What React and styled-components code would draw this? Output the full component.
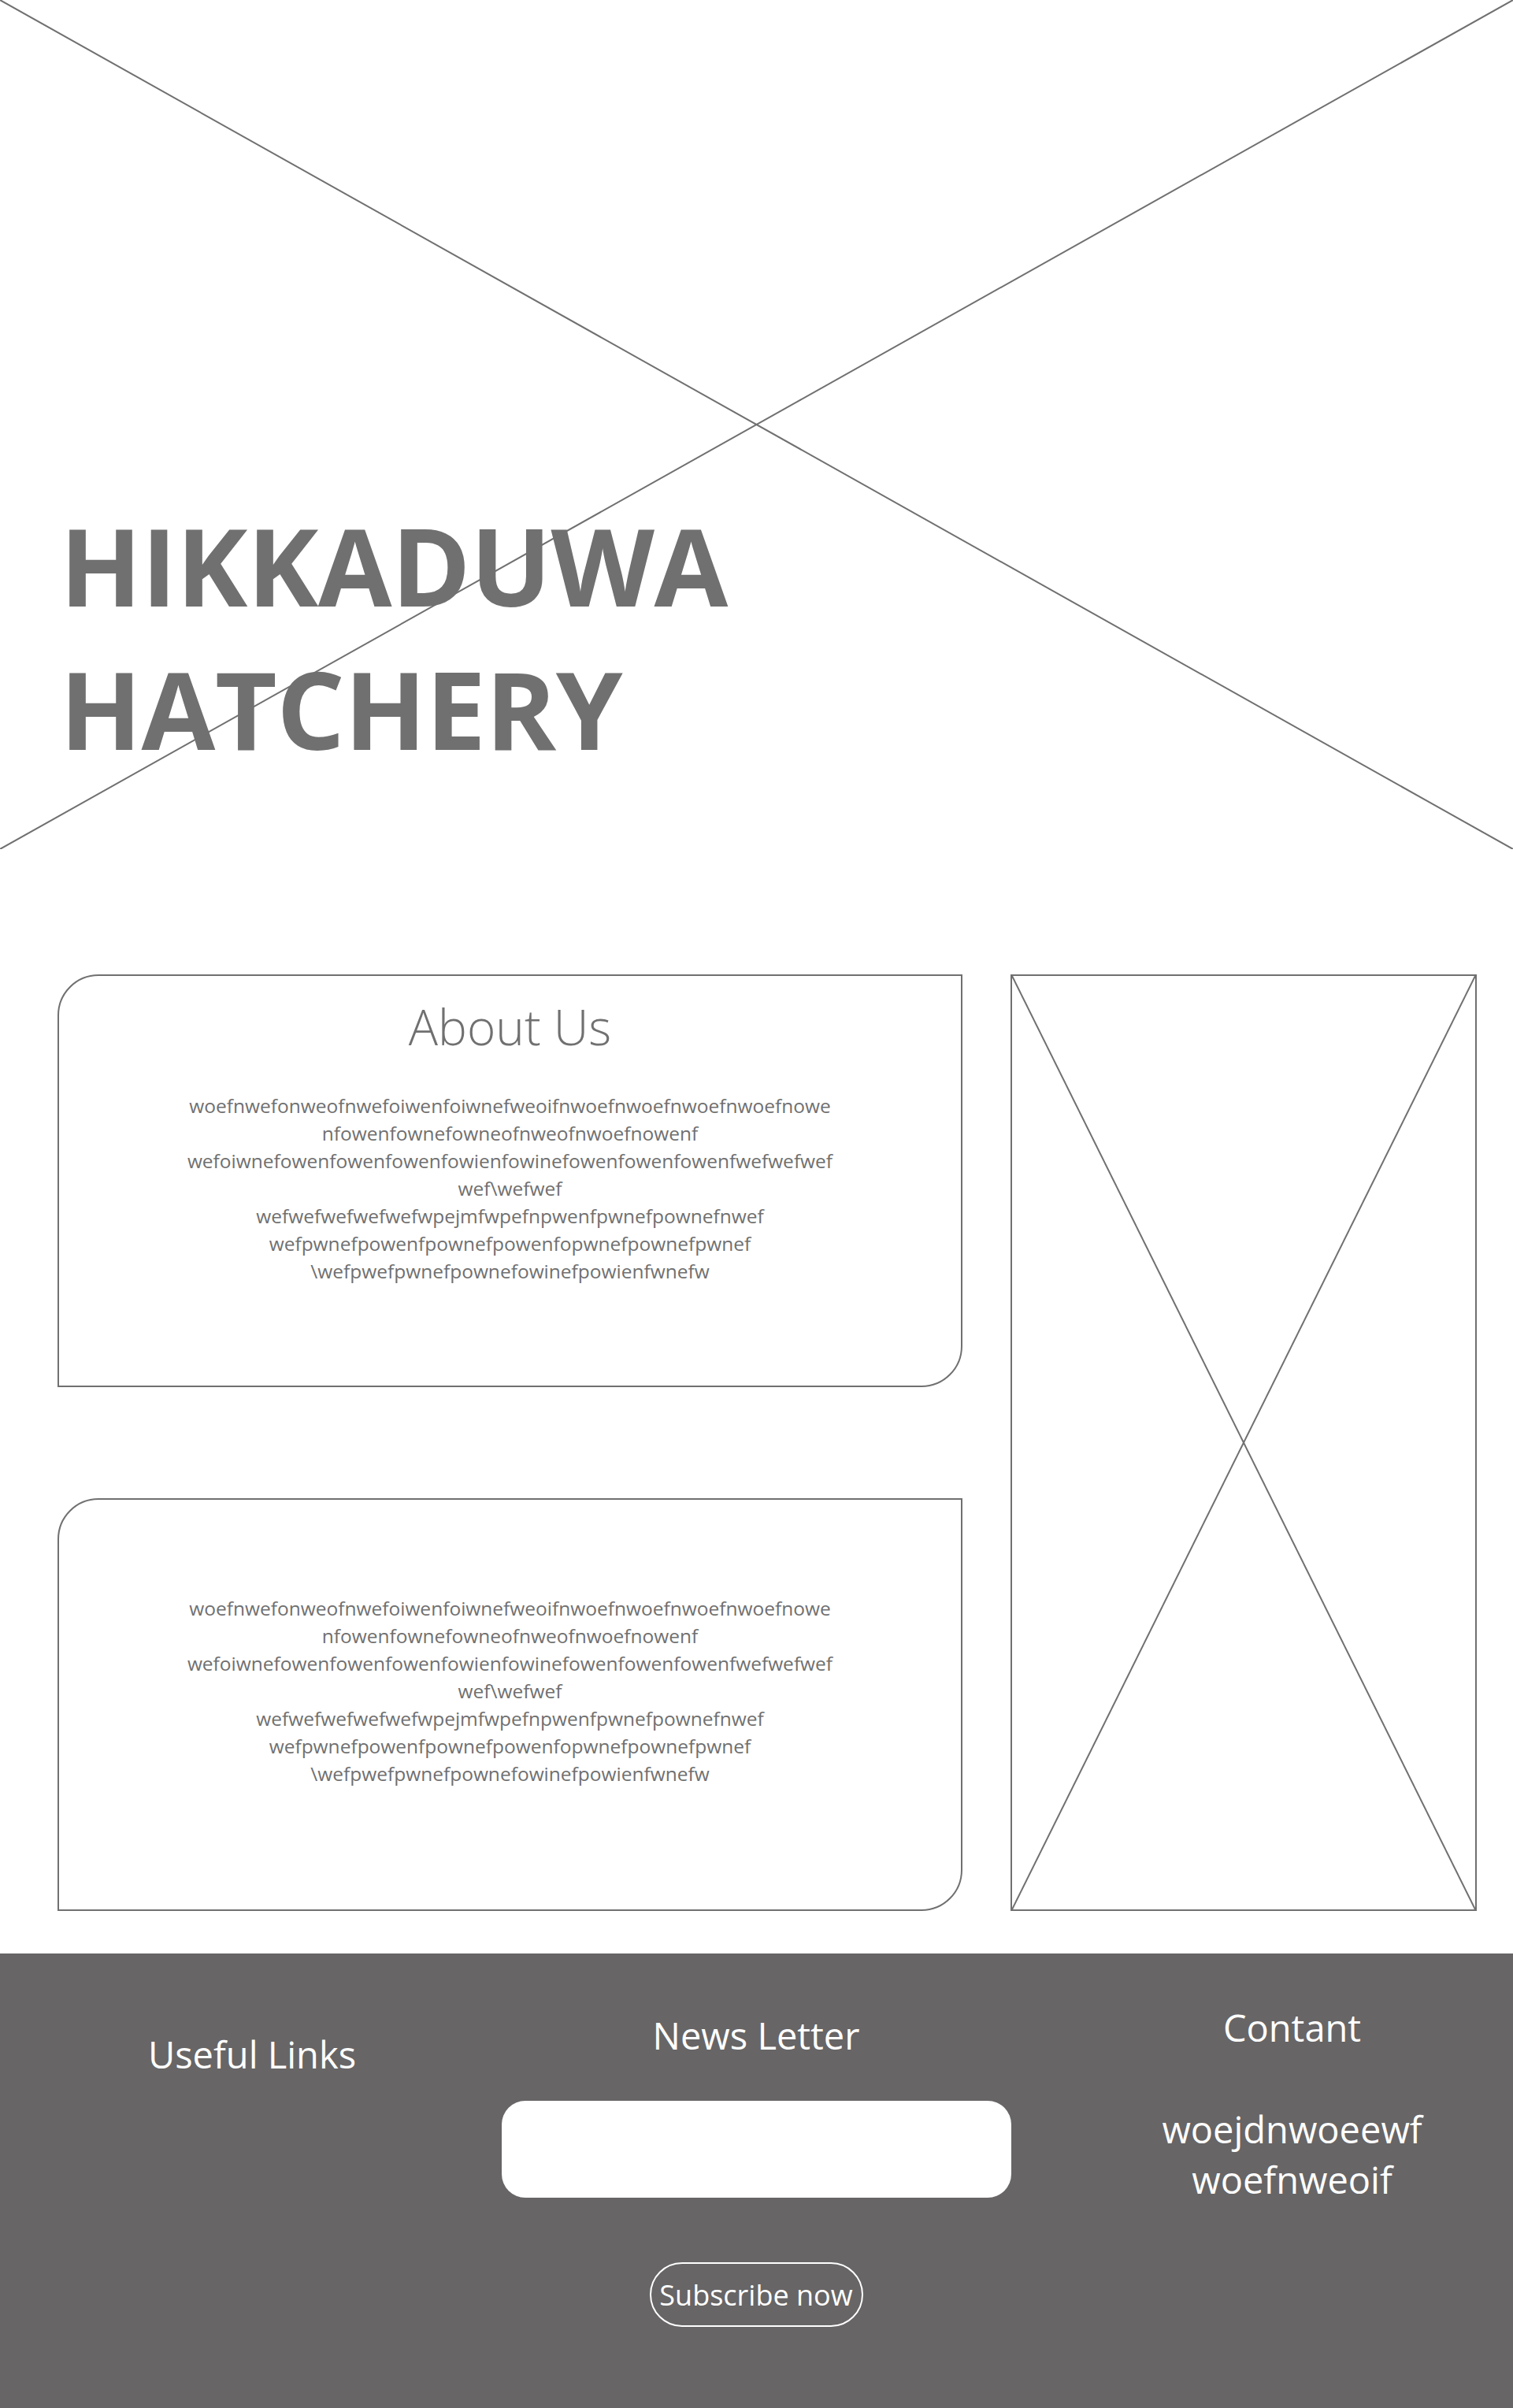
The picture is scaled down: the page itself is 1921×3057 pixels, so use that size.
import React from "react";
import styled, { createGlobalStyle } from "styled-components";

const GlobalStyle = createGlobalStyle`
  body {
    margin: 0;
    background: #ffffff;
    font-family: "Open Sans", "Noto Sans", sans-serif;
    color: #707070;
  }
`;

const Page = styled.div`
  width: 1921px;
`;

const Hero = styled.header`
  position: relative;
  height: 1078px;
  padding: 627px 0 0 76px;
  box-sizing: border-box;
`;

// placeholder cross drawn behind the title
const HeroArt = styled.svg`
  position: absolute;
  inset: 0;
  width: 100%;
  height: 100%;
`;

const Title = styled.h1`
  position: relative;
  margin: 0;
  font-size: 136px;
  line-height: 182px;
  font-weight: 700;
  color: #707070;
  letter-spacing: -0.5px;
`;

const Main = styled.main`
  display: grid;
  grid-template-columns: 1149px 592px;
  column-gap: 61px;
  padding: 159px 46px 54px 73px;
`;

const CardColumn = styled.div`
  display: flex;
  flex-direction: column;
  gap: 141px;
`;

const Card = styled.section`
  height: 524px;
  box-sizing: border-box;
  border: 2px solid #707070;
  border-radius: 52px 0 52px 0;
  padding-top: ${(p) => p.$top}px;
  display: flex;
  flex-direction: column;
  align-items: center;
`;

const CardTitle = styled.h2`
  margin: 0 0 41px;
  font-size: 62px;
  line-height: 84px;
  font-weight: 300;
  color: #707070;
`;

const CardText = styled.p`
  margin: 0;
  font-size: 24.5px;
  line-height: 35px;
  font-weight: 400;
  text-align: center;
  white-space: nowrap;
  color: #707070;
`;

const Placeholder = styled.div`
  position: relative;
  border: 2px solid #707070;
`;

const Cross = styled.svg`
  position: absolute;
  inset: 0;
  width: 100%;
  height: 100%;
`;

const Footer = styled.footer`
  height: 577px;
  box-sizing: border-box;
  background: #676566;
  color: #ffffff;
  display: grid;
  grid-template-columns: 640px 640px 1fr;
`;

const FooterCol = styled.div`
  display: flex;
  flex-direction: column;
  align-items: center;
  padding-top: ${(p) => p.$top}px;
  padding-left: ${(p) => p.$left || 0}px;
`;

const FooterHeading = styled.h3`
  margin: 0;
  font-size: 47px;
  line-height: 64px;
  font-weight: 400;
  color: #ffffff;
`;

const EmailInput = styled.input`
  margin-top: 51px;
  width: 647px;
  height: 123px;
  box-sizing: border-box;
  border: none;
  border-radius: 30px;
  background: #ffffff;
  outline: none;
`;

const SubscribeButton = styled.button`
  margin-top: 82px;
  width: 271px;
  height: 82px;
  box-sizing: border-box;
  border: 2px solid #ffffff;
  border-radius: 41px;
  background: transparent;
  color: #ffffff;
  font-family: "Open Sans", "Noto Sans", sans-serif;
  font-size: 36px;
  padding: 0;
`;

const ContactText = styled.p`
  margin: 65px 0 0;
  font-size: 47px;
  line-height: 64px;
  text-align: center;
  color: #ffffff;
`;

const lines = [
  "woefnwefonweofnwefoiwenfoiwnefweoifnwoefnwoefnwoefnwoefnowe",
  "nfowenfownefowneofnweofnwoefnowenf",
  "wefoiwnefowenfowenfowenfowienfowinefowenfowenfowenfwefwefwef",
  "wef\\wefwef",
  "wefwefwefwefwefwpejmfwpefnpwenfpwnefpownefnwef",
  "wefpwnefpowenfpownefpowenfopwnefpownefpwnef",
  "\\wefpwefpwnefpownefowinefpowienfwnefw",
];

const Filler = () => (
  <CardText>
    {lines.map((l, i) => (
      <React.Fragment key={i}>
        {l}
        {i < lines.length - 1 && <br />}
      </React.Fragment>
    ))}
  </CardText>
);

const App = () => {
  return (
    <Page>
      <GlobalStyle />
      <Hero>
        <HeroArt viewBox="0 0 1921 1078" preserveAspectRatio="none">
          <line x1="0" y1="0" x2="1921" y2="1078" stroke="#707070" strokeWidth="2" />
          <line x1="0" y1="1078" x2="1921" y2="0" stroke="#707070" strokeWidth="2" />
        </HeroArt>
        <Title>
          HIKKADUWA
          <br />
          HATCHERY
        </Title>
      </Hero>

      <Main>
        <CardColumn>
          <Card $top={22}>
            <CardTitle>About Us</CardTitle>
            <Filler />
          </Card>
          <Card $top={120}>
            <Filler />
          </Card>
        </CardColumn>
        <Placeholder>
          <Cross viewBox="0 0 100 100" preserveAspectRatio="none">
            <line x1="0" y1="0" x2="100" y2="100" stroke="#707070" strokeWidth="2" vectorEffect="non-scaling-stroke" />
            <line x1="100" y1="0" x2="0" y2="100" stroke="#707070" strokeWidth="2" vectorEffect="non-scaling-stroke" />
          </Cross>
        </Placeholder>
      </Main>

      <Footer>
        <FooterCol $top={96}>
          <FooterHeading>Useful Links</FooterHeading>
        </FooterCol>
        <FooterCol $top={72}>
          <FooterHeading>News Letter</FooterHeading>
          <EmailInput type="text" />
          <SubscribeButton>Subscribe now</SubscribeButton>
        </FooterCol>
        <FooterCol $top={62} $left={80}>
          <FooterHeading>Contant</FooterHeading>
          <ContactText>
            woejdnwoeewf
            <br />
            woefnweoif
          </ContactText>
        </FooterCol>
      </Footer>
    </Page>
  );
};

export default App;
